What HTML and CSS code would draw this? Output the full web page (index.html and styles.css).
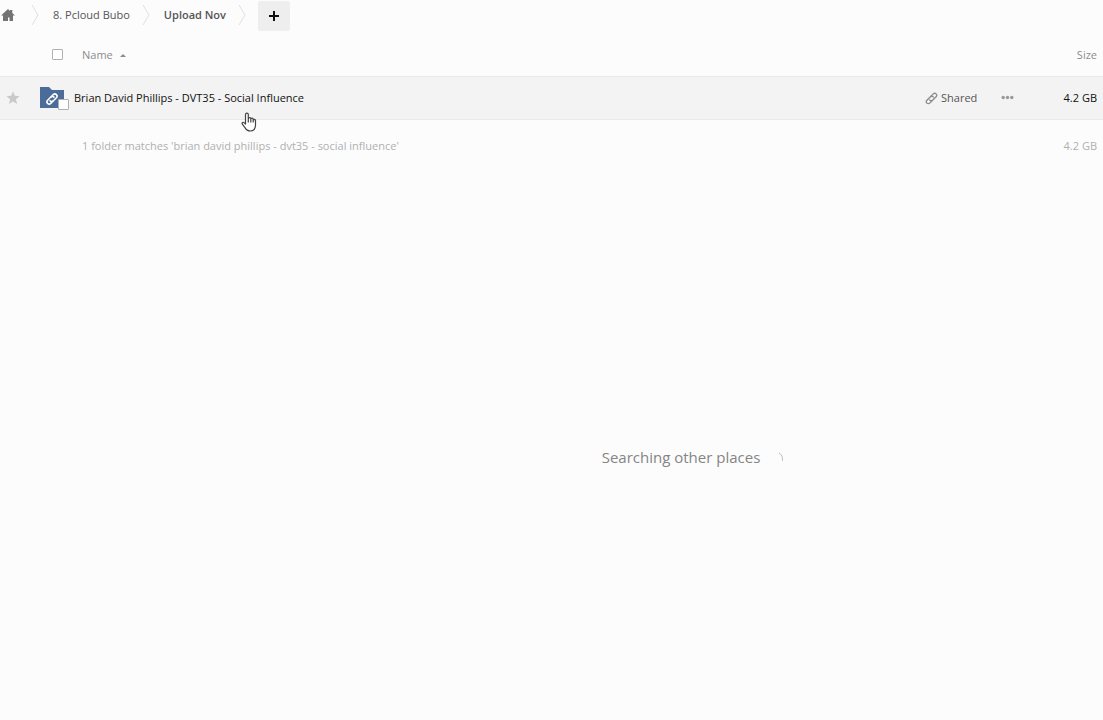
FILE: index.html
```
<!DOCTYPE html>
<html lang="en">
<head>
<meta charset="utf-8">
<title>Upload Nov</title>
<link rel="stylesheet" href="styles.css">
</head>
<body>
<header class="toolbar">
  <nav class="crumbs" aria-label="Breadcrumb">
    <a class="crumb crumb-home" href="#" aria-label="Home"><svg width="14" height="12" viewBox="0 0 14 12"><path d="M7 0 9 2V1h2.300v3L14 6.500h-2V12H8.500V8.500h-1.500V12H2V6.500H0z" fill="#747474"/></svg></a>
    <svg class="chevron" width="8" height="22" viewBox="0 0 8 22"><path d="M1 1 7 11 1 21"/></svg>
    <a class="crumb crumb-parent" href="#">8. Pcloud Bubo</a>
    <svg class="chevron" width="8" height="22" viewBox="0 0 8 22"><path d="M1 1 7 11 1 21"/></svg>
    <a class="crumb crumb-current" href="#">Upload Nov</a>
    <svg class="chevron" width="8" height="22" viewBox="0 0 8 22"><path d="M1 1 7 11 1 21"/></svg>
  </nav>
  <button class="add" type="button" aria-label="Add"><svg width="12" height="12" viewBox="0 0 12 12"><path d="M6 1v10M1 6h10" stroke="#111" stroke-width="2"/></svg></button>
</header>
<main>
  <table class="files">
    <colgroup><col class="col-star"><col class="col-icon"><col><col class="col-shared"><col class="col-more"><col class="col-size"></colgroup>
    <thead>
      <tr>
        <th></th>
        <th class="select-all"><input class="check" type="checkbox" aria-label="Select all"></th>
        <th class="inset"><a class="sort" href="#">Name <svg width="8" height="4" viewBox="0 0 8 4"><path d="M1 4 4 1l3 3z" fill="#8c8c8c"/></svg></a></th>
        <th></th>
        <th></th>
        <th class="size">Size</th>
      </tr>
    </thead>
    <tbody>
      <tr>
        <td class="star-cell"><button class="plain" type="button" aria-label="Favourite"><svg width="14" height="14" viewBox="0 0 14 14"><path d="m7 .5 1.800 4.300 4.700.4-3.600 3.100 1.200 4.700L7 10.500 2.900 13l1.200-4.700L.5 5.200l4.700-.4z" fill="#c9c9c9"/></svg></button></td>
        <td class="icon-cell">
          <div class="folder">
            <svg width="24" height="21" viewBox="0 0 24 21"><path d="M0 0h9l3 3h12v18H0z" fill="#4b6b98"/><g transform="rotate(-45 12 12)" fill="none" stroke="#fff" stroke-width="1.500"><path d="M11.500 14.200H8a2.200 2.200 0 0 1 0-4.400H12.500a2.200 2.200 0 0 1 2 3"/><path d="M12.500 9.800H16a2.200 2.200 0 0 1 0 4.400H11.500a2.200 2.200 0 0 1-2-3"/></g></svg>
            <input class="check folder-check" type="checkbox" aria-label="Select Brian David Phillips - DVT35 - Social Influence">
          </div>
        </td>
        <td><a class="file-name" href="#">Brian David Phillips - DVT35 - Social Influence</a></td>
        <td><button class="plain shared" type="button"><svg width="13" height="14" viewBox="0 0 13 14"><g transform="rotate(-45 6.500 7.500)" fill="none" stroke="#8b8b8b" stroke-width="1.300"><path d="M6 9.500H2A2 2 0 0 1 2 5.500H7A2 2 0 0 1 8.700 8.300"/><path d="M7 5.500h4a2 2 0 0 1 0 4H6A2 2 0 0 1 4.300 6.700"/></g></svg>Shared</button></td>
        <td><button class="plain more" type="button" aria-label="More"><svg width="13" height="5" viewBox="0 0 13 5" fill="#999"><circle cx="2.200" cy="2.500" r="1.700"/><circle cx="6.500" cy="2.500" r="1.700"/><circle cx="10.800" cy="2.500" r="1.700"/></svg></button></td>
        <td class="size">4.2 GB</td>
      </tr>
    </tbody>
    <tfoot>
      <tr>
        <td></td>
        <td></td>
        <td class="inset" colspan="3">1 folder matches 'brian david phillips - dvt35 - social influence'</td>
        <td class="size">4.2 GB</td>
      </tr>
    </tfoot>
  </table>
  <div class="searching" role="status">Searching other places
    <svg width="6" height="10" viewBox="0 0 6 10"><path d="M1 1q4 2 3.500 8" fill="none" stroke="#c0c0c0"/></svg>
  </div>
</main>
<svg class="pointer" width="16" height="20" viewBox="0 0 16 20"><path d="M4.500 12V2.500a1.400 1.400 0 0 1 2.800 0V8 6.800a1.200 1.200 0 0 1 2.500 0V8.500 7.300a1.200 1.200 0 0 1 2.400 0V9 8.300a1.200 1.200 0 0 1 2.300 0V13c0 3.800-2 6-5.200 6-3.300 0-4.300-1.500-5.500-3.600L1.300 12.200c-.8-1.500.9-2.600 2-1.400zM7.300 8v2.500M9.800 8.500v2M12.200 9v1.500" fill="#fff" stroke="#444" stroke-width="1.200" stroke-linejoin="round"/></svg>
</body>
</html>
```
FILE: styles.css
```
* { box-sizing: border-box; }
body {
  margin: 0;
  background: #fcfcfc;
  color: #555;
  font: 11px/16px "Open Sans", sans-serif;
}
a { color: inherit; text-decoration: none; }
svg { display: block; flex: none; }
.toolbar { display: flex; gap: 12px; height: 34px; }
.crumbs { display: flex; align-items: center; height: 30px; }
.crumb-home { padding: 0 16px 0 1px; }
.crumb-parent { padding: 0 12px 0 14px; }
.crumb-current { padding: 0 12px 0 14px; font-weight: 600; }
.chevron { fill: none; stroke: #e0e0e0; }
.add {
  display: flex;
  align-items: center;
  justify-content: center;
  width: 32px;
  height: 30px;
  margin-top: 1px;
  padding: 0;
  border: 0;
  border-radius: 2px;
  background: #eee;
}
.files { width: 100%; table-layout: fixed; border-collapse: collapse; }
.files th, .files td { padding: 0; text-align: left; font-weight: 400; }
.col-star { width: 40px; }
.col-icon { width: 34px; }
.col-shared { width: 76px; }
.col-more { width: 56px; }
.col-size { width: 46px; }
.files thead tr { height: 42px; color: #8c8c8c; }
.files tbody tr {
  height: 43px;
  border: solid #e9e9e9;
  border-width: 1px 0;
  background: #f3f3f3;
  color: #111;
}
.files tfoot tr { height: 53px; color: #b0b0b0; }
.files .size { padding-right: 6px; text-align: right; }
.files .inset { padding-left: 8px; }
.files .select-all { padding-left: 12px; }
.files .star-cell { padding-left: 6px; }
.sort { display: flex; align-items: center; gap: 6px; }
.check {
  appearance: none;
  display: block;
  width: 11px;
  height: 11px;
  margin: 0;
  border: 1px solid #b0b0b0;
  border-radius: 1px;
  background: #fff;
}
.folder { position: relative; width: 24px; }
.folder-check { position: absolute; right: -5px; bottom: -2px; }
.plain {
  display: flex;
  align-items: center;
  padding: 0;
  border: 0;
  background: none;
  color: #555;
  font: inherit;
}
.shared { gap: 3px; }
.searching {
  display: flex;
  align-items: center;
  justify-content: center;
  gap: 18px;
  padding: 273px 0 24px 283px;
  color: #858585;
  font-size: 15px;
  line-height: 24px;
}
.pointer { position: absolute; top: 112px; left: 241px; }
```
